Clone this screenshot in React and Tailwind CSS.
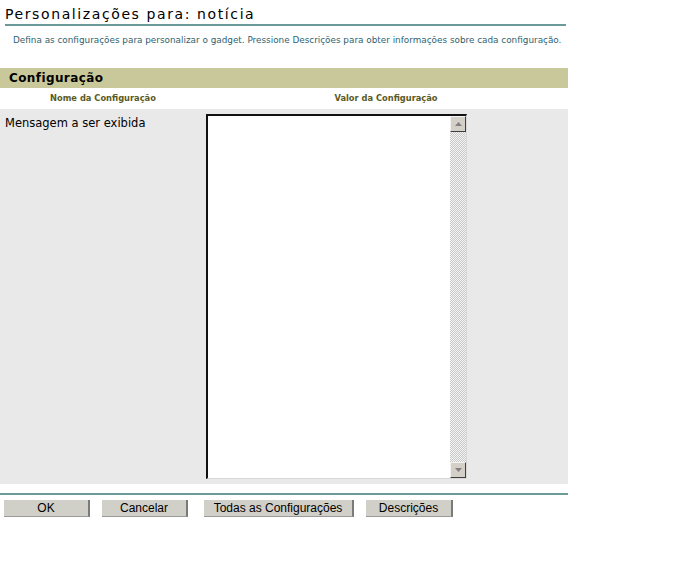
import React from 'react';

const checker = {
  backgroundImage:
    'repeating-conic-gradient(#c8c8c8 0% 25%, #f4f4f4 0% 50%)',
  backgroundSize: '2px 2px',
};

const ScrollButton = ({ up }) => (
  <div className="w-[16px] h-[16px] bg-[#d4d0c8] border border-t-[#f4f4f4] border-l-[#f4f4f4] border-r-[#404040] border-b-[#404040] flex items-center justify-center">
    <svg width="7" height="4" viewBox="0 0 7 4">
      {up ? <path d="M3.5 0 L7 4 L0 4 Z" fill="#808080" /> : <path d="M0 0 L7 0 L3.5 4 Z" fill="#808080" />}
    </svg>
  </div>
);

const Button = ({ label, width }) => (
  <button
    className={`${width} h-[17px] bg-[#d0cfc8] border-r-2 border-b border-r-[#7a7a7a] border-b-[#9a9a9a] text-[12px] leading-none text-black font-['Liberation_Sans',Arial,sans-serif]`}
  >
    {label}
  </button>
);

export default function App() {
  return (
    <div className="w-[696px] h-[574px] bg-white font-['DejaVu_Sans',Verdana,sans-serif]">
      {/* Title */}
      <div className="pl-[5px] pt-[5px] w-[566px]">
        <h1 className="text-[14px] leading-[18px] tracking-[1.6px] text-black">Personalizações para: notícia</h1>
        <div className="h-[2px] bg-[#6a9a9a] mt-[1px]" />
      </div>

      <p className="pl-[13px] pt-[8px] text-[8.85px] leading-[12px] text-[#2f5f6f]">
        Defina as configurações para personalizar o gadget. Pressione Descrições para obter informações sobre cada configuração.
      </p>

      {/* Section header */}
      <div className="mt-[22px] w-[568px] h-[20px] bg-[#c8c89a] flex items-center pl-[9px]">
        <span className="text-[12px] font-bold tracking-[0.4px] text-black">Configuração</span>
      </div>

      {/* Column headers */}
      <div className="w-[568px] flex h-[21px] items-center text-[8.3px] font-bold text-[#5a5a1e]">
        <div className="w-[206px] text-center">Nome da Configuração</div>
        <div className="w-[360px] text-center">Valor da Configuração</div>
      </div>

      {/* Row */}
      <div className="w-[568px] h-[375px] bg-[#e9e9e9] flex">
        <div className="w-[206px] pl-[5px] pt-[7px] text-[11.5px] leading-[14px] text-black">Mensagem a ser exibida</div>
        <div className="pt-[5px]">
          <div className="w-[261px] h-[365px] bg-white border-t-2 border-l-2 border-t-[#111] border-l-[#111] border-r border-b border-r-[#d8d8d8] border-b-[#d8d8d8] flex justify-end">
            <div className="w-[16px] flex flex-col" style={checker}>
              <ScrollButton up />
              <div className="flex-1" />
              <ScrollButton />
            </div>
          </div>
        </div>
      </div>

      {/* Bottom rule */}
      <div className="mt-[9px] w-[568px] h-[2px] bg-[#6a9a9a]" />

      {/* Buttons */}
      <div className="flex pt-[5px] pl-[4px]">
        <Button label="OK" width="w-[86px]" />
        <div className="w-[12px]" />
        <Button label="Cancelar" width="w-[86px]" />
        <div className="w-[16px]" />
        <Button label="Todas as Configurações" width="w-[150px]" />
        <div className="w-[12px]" />
        <Button label="Descrições" width="w-[87px]" />
      </div>
    </div>
  );
}
